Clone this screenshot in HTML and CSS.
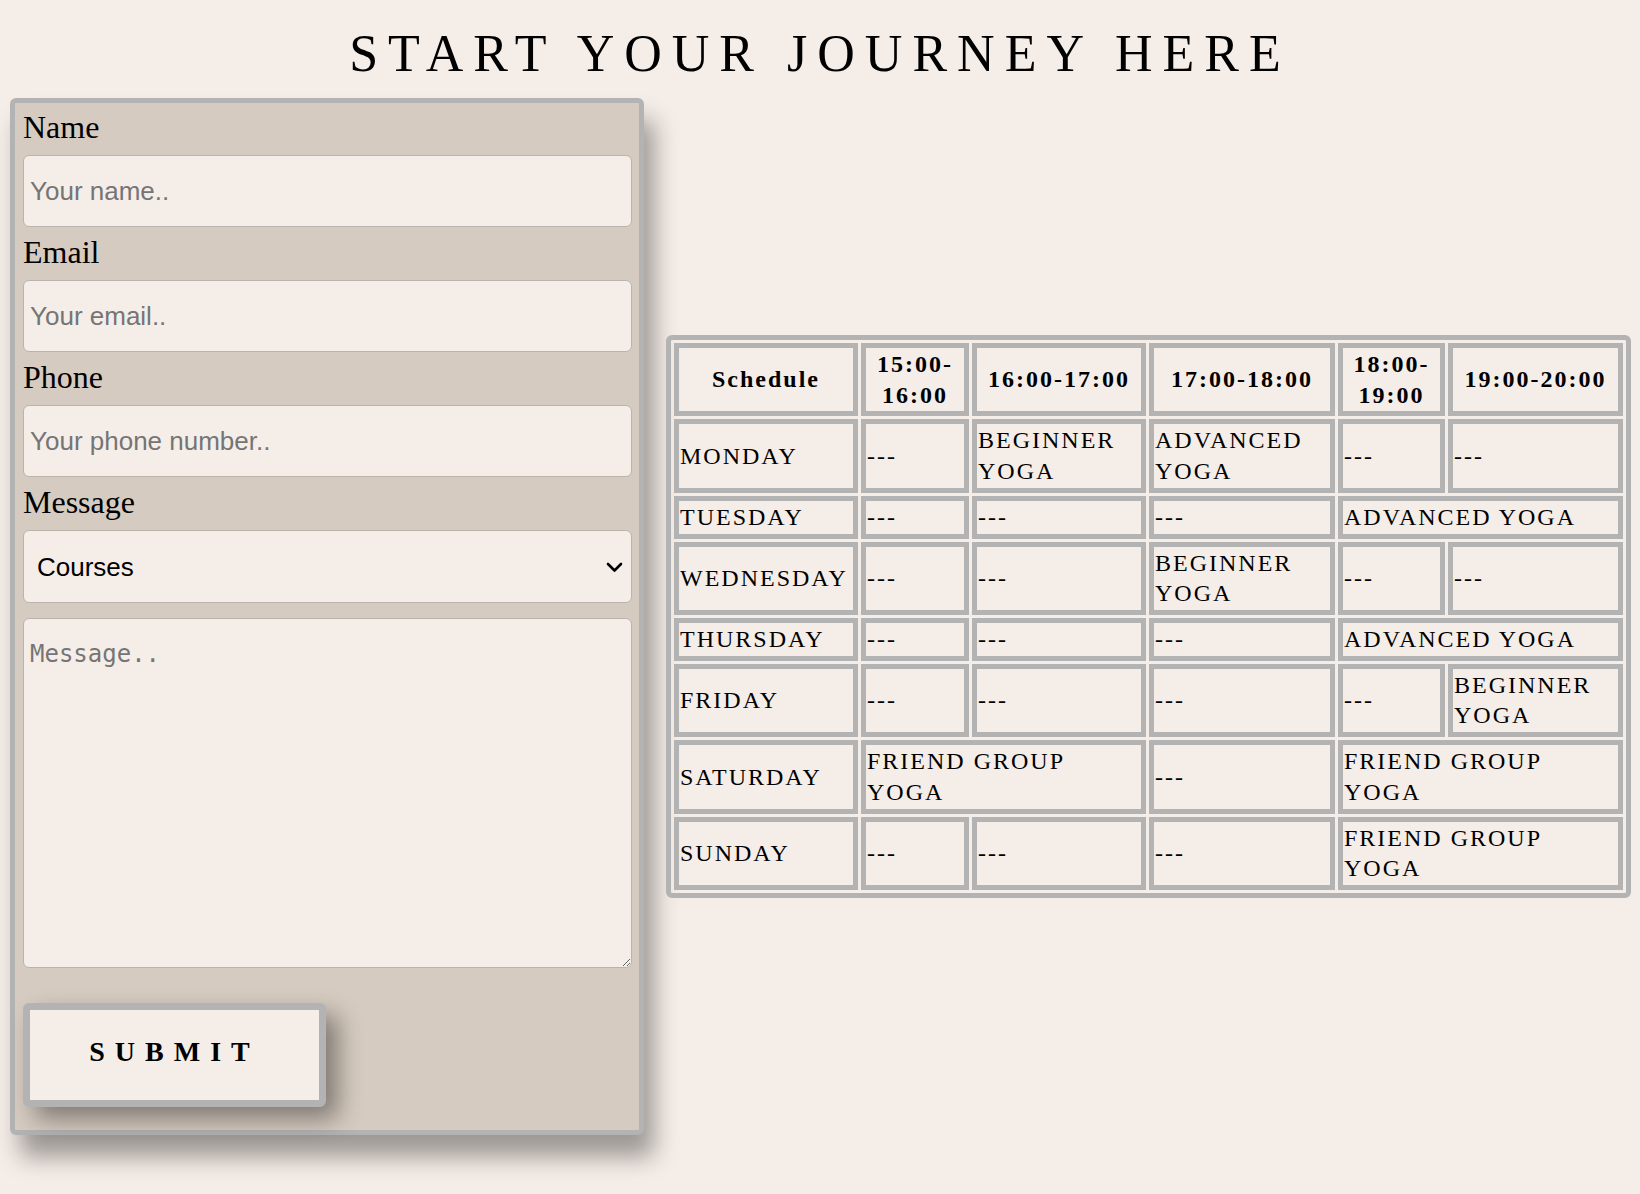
FILE: index.html
```html
<!DOCTYPE html>
<html lang="en">
<head>
<meta charset="utf-8">
<title>Start Your Journey Here</title>
<link rel="stylesheet" href="styles.css">
</head>
<body>
<h1 class="title">START YOUR JOURNEY HERE</h1>
<main class="content">
  <form class="contact">
    <label class="field-label" for="name">Name</label>
    <input class="field" id="name" type="text" placeholder="Your name..">
    <label class="field-label" for="email">Email</label>
    <input class="field" id="email" type="email" placeholder="Your email..">
    <label class="field-label" for="phone">Phone</label>
    <input class="field" id="phone" type="tel" placeholder="Your phone number..">
    <label class="field-label" for="topic">Message</label>
    <div class="select-wrap">
      <select class="field select" id="topic">
        <option>Courses</option>
      </select>
      <svg class="chevron" width="17" height="11" viewBox="0 0 17 11" aria-hidden="true">
        <polyline points="2,2 8.5,8.5 15,2" fill="none" stroke="#000" stroke-width="2.6" stroke-linecap="round" stroke-linejoin="round"/>
      </svg>
    </div>
    <textarea class="field message" placeholder="Message.."></textarea>
    <button class="submit" type="button">SUBMIT</button>
  </form>

  <table class="schedule">
    <colgroup>
      <col class="c1"><col class="c2"><col class="c3"><col class="c4"><col class="c5"><col class="c6">
    </colgroup>
    <tr>
      <th>Schedule</th><th>15:00-16:00</th><th>16:00-17:00</th><th>17:00-18:00</th><th>18:00-19:00</th><th>19:00-20:00</th>
    </tr>
    <tr>
      <td>MONDAY</td><td>---</td><td>BEGINNER YOGA</td><td>ADVANCED YOGA</td><td>---</td><td>---</td>
    </tr>
    <tr>
      <td>TUESDAY</td><td>---</td><td>---</td><td>---</td><td colspan="2">ADVANCED YOGA</td>
    </tr>
    <tr>
      <td>WEDNESDAY</td><td>---</td><td>---</td><td>BEGINNER YOGA</td><td>---</td><td>---</td>
    </tr>
    <tr>
      <td>THURSDAY</td><td>---</td><td>---</td><td>---</td><td colspan="2">ADVANCED YOGA</td>
    </tr>
    <tr>
      <td>FRIDAY</td><td>---</td><td>---</td><td>---</td><td>---</td><td>BEGINNER YOGA</td>
    </tr>
    <tr>
      <td>SATURDAY</td><td colspan="2">FRIEND GROUP YOGA</td><td>---</td><td colspan="2">FRIEND GROUP YOGA</td>
    </tr>
    <tr>
      <td>SUNDAY</td><td>---</td><td>---</td><td>---</td><td colspan="2">FRIEND GROUP YOGA</td>
    </tr>
  </table>
</main>
</body>
</html>
```

FILE: styles.css
```css
body {
  margin: 0;
  background: #f5ede8;
  color: #000;
  font-family: "Liberation Serif", "Times New Roman", serif;
}

.title {
  margin: 0;
  padding: 24px 0 0 0;
  font-size: 52px;
  line-height: 60px;
  font-weight: normal;
  letter-spacing: 10px;
  text-align: center;
}

.content {
  display: flex;
  align-items: center;
  gap: 22px;
  padding: 14px 9px 50px 10px;
}

.contact {
  flex: none;
  width: 634px;
  box-sizing: border-box;
  background: #d6cbc0;
  border: 5px solid #b3b3b3;
  border-radius: 6px;
  padding: 6px 7px 23px 8px;
  box-shadow: 10px 22px 24px rgba(0, 0, 0, 0.36);
}

.field-label {
  display: block;
  font-size: 32px;
  line-height: 37px;
}

.field {
  display: block;
  width: 100%;
  height: 72px;
  box-sizing: border-box;
  margin: 9px 0 7px;
  padding: 0 6px;
  background: #f5ede8;
  border: 1px solid #bab4af;
  border-radius: 6px;
  color: #000;
  font-family: "Liberation Sans", Arial, sans-serif;
  font-size: 26px;
  outline: none;
}

.field::placeholder {
  color: #757575;
}

.select-wrap {
  position: relative;
  margin: 9px 0 0;
}

.select {
  margin: 0;
  height: 73px;
  padding-left: 13px;
  appearance: none;
  -webkit-appearance: none;
}

.chevron {
  position: absolute;
  right: 9px;
  top: 32px;
  pointer-events: none;
}

.message {
  height: 350px;
  margin: 15px 0 0;
  padding: 21px 6px 6px;
  font-family: "DejaVu Sans Mono", monospace;
  font-size: 24px;
  resize: vertical;
}

.submit {
  display: block;
  width: 303px;
  height: 104px;
  margin-top: 35px;
  padding: 0 0 6px;
  box-sizing: border-box;
  background: #f5ede8;
  border: 7px solid #b3b3b3;
  border-radius: 6px;
  box-shadow: 12px 12px 24px rgba(0, 0, 0, 0.4);
  color: #000;
  font-family: "Liberation Serif", serif;
  font-size: 28px;
  font-weight: bold;
  letter-spacing: 10px;
}

.schedule {
  flex: none;
  width: 965px;
  table-layout: fixed;
  border: 5px solid #b3b3b3;
  border-radius: 6px;
  border-spacing: 3px;
  font-size: 24px;
  line-height: 1.28;
  letter-spacing: 2px;
}

.c1 { width: 184px; }
.c2 { width: 108px; }
.c3 { width: 174px; }
.c4 { width: 186px; }
.c5 { width: 107px; }
.c6 { width: 175px; }

.schedule th,
.schedule td {
  border: 5px solid #b3b3b3;
  padding: 1px;
  vertical-align: middle;
  font-weight: normal;
}

.schedule th {
  font-weight: bold;
  text-align: center;
}

.schedule td {
  text-align: left;
}
```
